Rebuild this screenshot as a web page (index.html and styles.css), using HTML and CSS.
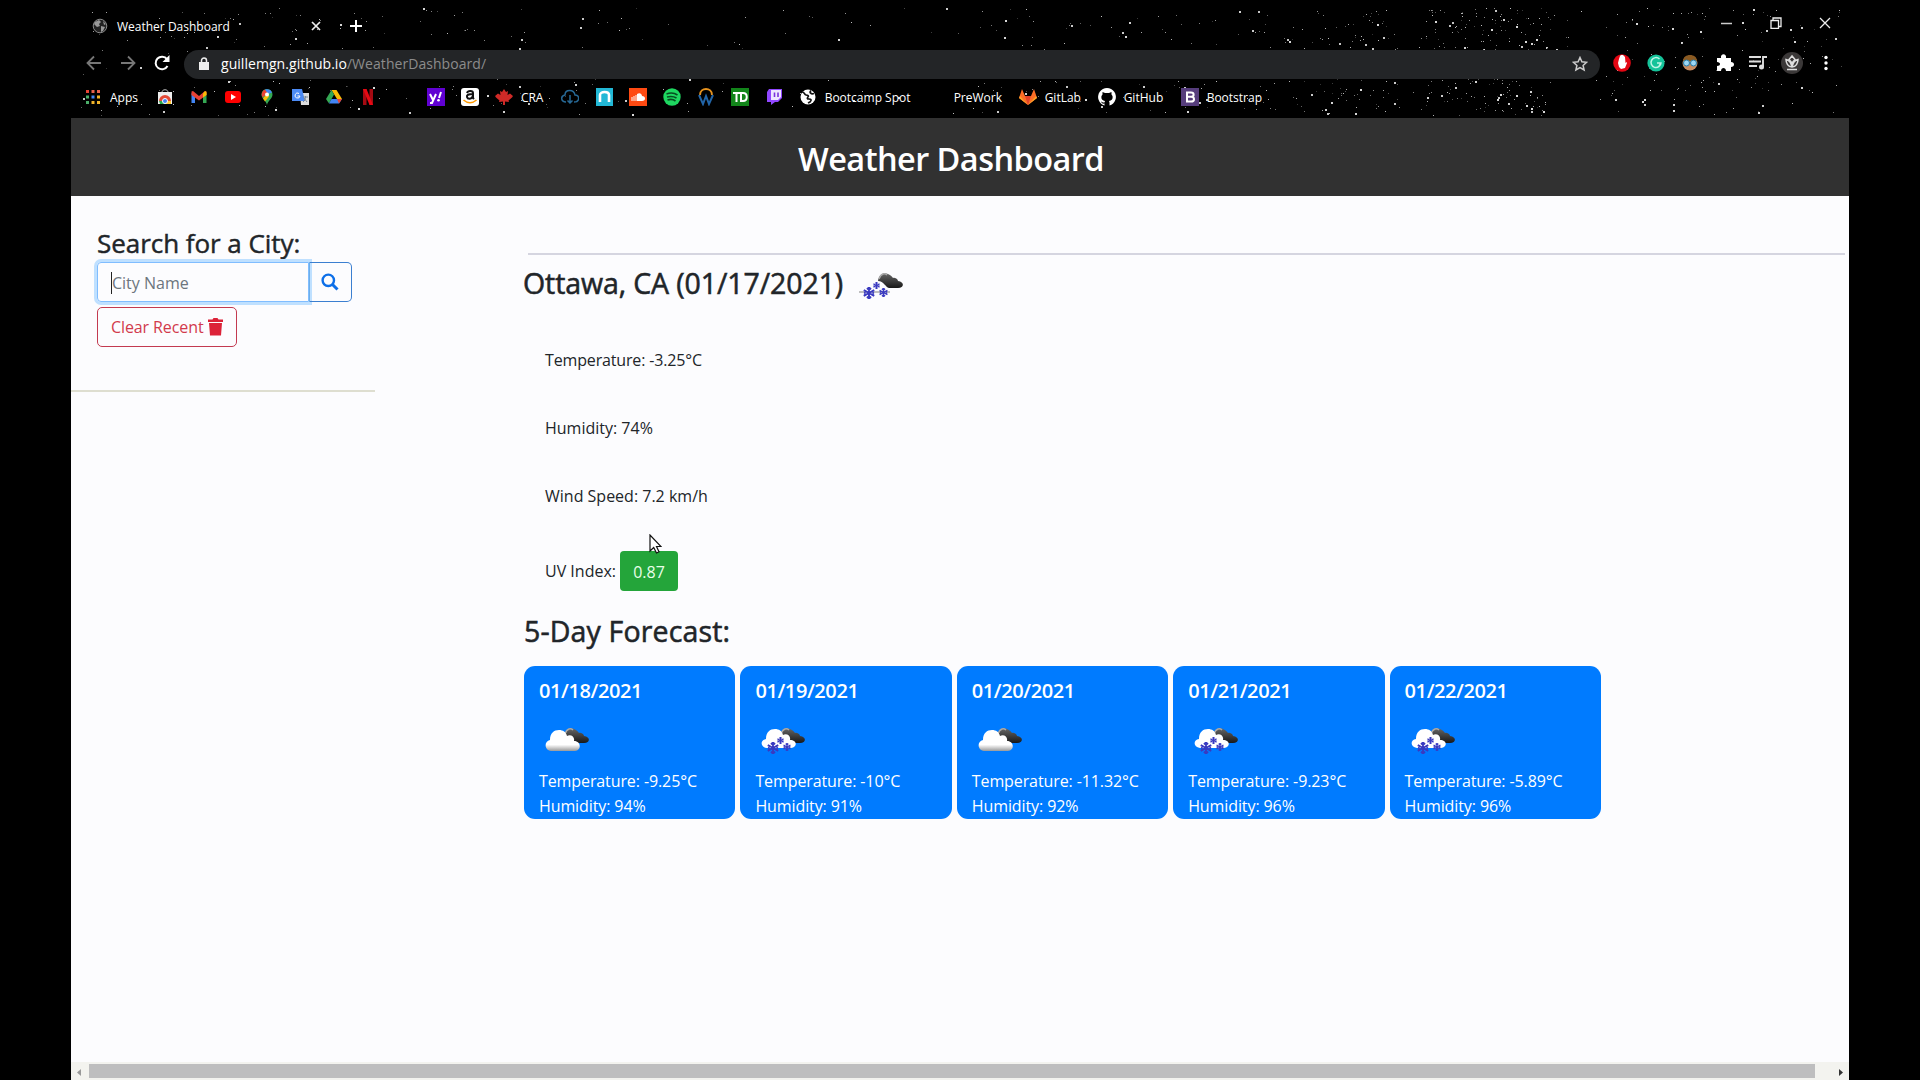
FILE: index.html
```html
<!DOCTYPE html>
<html lang="en">
<head>
<meta charset="utf-8">
<title>Weather Dashboard</title>
<link rel="stylesheet" href="styles.css">
</head>
<body>
<svg class="defs" width="0" height="0" aria-hidden="true">
  <defs>
    <linearGradient id="dark" x1="0" y1="0" x2="0" y2="1"><stop offset="0" stop-color="#666"/><stop offset="1" stop-color="#181818"/></linearGradient>
    <linearGradient id="light" x1="0" y1="0" x2="0" y2="1"><stop offset=".7" stop-color="#fff"/><stop offset="1" stop-color="#999"/></linearGradient>
  </defs>
  <symbol id="darkcloud" viewBox="0 0 44 28"><path d="M19 9C20 2 25 0 29 2c3 1 4 3 5 4 3-1 5 2 5 3 7 1 6 7 0 7h-9c-4-1-5-7-11-7z" fill="url(#dark)"/><path d="M20 7C22 1 26 1 28 3" fill="none" stroke="#aaa" stroke-width="1.5"/></symbol>
  <symbol id="whitecloud" viewBox="0 0 44 28"><path d="M6 24C-1 23-1 14 5 13 5 6 9 3 14 3c4 0 7 2 8 6 4-2 8 1 7 5 7 0 8 9 1 10z" fill="url(#light)"/></symbol>
  <symbol id="flake" viewBox="-6 -6 12 12"><path d="M0-6V6M-5.2-3 5.2 3M-5.2 3 5.2-3M-2-5 0-3 2-5M-2 5 0 3 2 5M-5-.5l2-1M-5 .5l2 1M5-.5l-2-1M5 .5l-2 1" stroke="#3a3ac0" stroke-width="1.9" fill="none"/></symbol>
  <symbol id="clouds" viewBox="0 0 44 28"><use href="#darkcloud" width="44" height="28"/><use href="#whitecloud" width="44" height="28"/></symbol>
  <symbol id="snow" viewBox="0 0 44 28"><use href="#darkcloud" width="44" height="28"/><path d="M6 21C-1 20-1 13 5 12 5 5 9 2 14 2c4 0 7 2 8 6 4-2 8 1 7 5 7 0 8 7 1 8z" fill="#fff"/><use href="#flake" x="6" y="15" width="12" height="12"/><use href="#flake" x="16" y="10" width="7" height="7"/><use href="#flake" x="22" y="16" width="8" height="8"/></symbol>
</svg>
<div class="window">
  <div class="chrome">
    <svg class="stars" id="stars" width="1778" height="118"></svg>
    <div class="tabs">
      <svg class="favicon" viewBox="0 0 16 16"><circle cx="8" cy="8" r="6.8" fill="#222" stroke="#8a8a8a"/><path d="M3 4l4-2 2 2-2 2 1 2-3 1-3-3zM9 8l4 1-2 4-2 1zM11 3l3 3-2 1z" fill="#999"/></svg>
      <span class="tab-title">Weather Dashboard</span>
      <svg class="tab-close" viewBox="0 0 10 10"><path d="M1 1l8 8M9 1 1 9" stroke="#eee" stroke-width="1.7"/></svg>
      <svg class="tab-new" viewBox="0 0 12 12"><path d="M6 0v12M0 6h12" stroke="#fff" stroke-width="2"/></svg>
      <div class="controls">
        <svg viewBox="0 0 12 12"><path d="M0 6.5h11" stroke="#ccc" stroke-width="1.5"/></svg>
        <svg viewBox="0 0 12 12"><path d="M1 3.5h7.500v8H1zM3 3V1h8v8.500H9" stroke="#eee" stroke-width="1.3" fill="none"/></svg>
        <svg viewBox="0 0 12 12"><path d="M1 1l10 10M11 1 1 11" stroke="#eee" stroke-width="1.3"/></svg>
      </div>
    </div>
    <div class="toolbar">
      <svg class="nav" viewBox="0 0 16 16"><path d="M15 8H1.500M8 1.500 1.500 8 8 14.500" stroke="#777" stroke-width="1.8" fill="none"/></svg>
      <svg class="nav" viewBox="0 0 16 16"><path d="M1 8h13.500M8 1.500 14.500 8 8 14.500" stroke="#777" stroke-width="1.8" fill="none"/></svg>
      <svg class="nav" viewBox="0 0 16 16"><path d="M13.500 11A6.300 6.300 0 1 1 13 4.200" stroke="#fff" stroke-width="2" fill="none"/><path d="M15.500 0v7h-7z" fill="#fff"/></svg>
      <div class="omnibox">
        <svg class="lock" viewBox="0 0 10 14"><path d="M0 5h10v8H0z" fill="#eee"/><path d="M2.500 6V3.500a2.500 2.500 0 0 1 5 0V6" stroke="#eee" stroke-width="1.5" fill="none"/></svg>
        <span class="url">guillemgn.github.io<span class="path">/WeatherDashboard/</span></span>
        <svg class="fav" viewBox="0 0 16 16"><path d="M8 1.500l1.900 4.300 4.700.5-3.500 3.100 1 4.600L8 11.600 3.900 14l1-4.600L1.400 6.300l4.700-.5z" stroke="#ccc" stroke-width="1.5" fill="none"/></svg>
      </div>
      <div class="extensions">
        <svg viewBox="0 0 22 22"><circle cx="11" cy="11" r="8.800" fill="#e30613"/><path d="M7 11l1-4 1-3 1-1 2 0 2 2 .5 6 1-1 .5 1-2 5-4 1-2-2z" fill="#fff"/></svg>
        <svg viewBox="0 0 22 22"><circle cx="11" cy="11" r="8.600" fill="#15c39a"/><path d="M14.500 7A5 5 0 1 0 16 11h-4M16 11l-2 3" stroke="#bff5e6" stroke-width="1.500" fill="none"/></svg>
        <svg viewBox="0 0 22 22"><circle cx="11" cy="11" r="7.500" fill="#c98d62"/><path d="M4 9c0-8 14-8 14 0z" fill="#8a5a22"/><circle cx="7.500" cy="11" r="3" fill="#9cd7f5" stroke="#277aa5"/><circle cx="14.500" cy="11" r="3" fill="#9cd7f5" stroke="#277aa5"/></svg>
        <svg viewBox="0 0 22 22"><path d="M4 6h4c-1-5 6-5 5 0h5v4c4 0 4 5 0 5v4h-5c0-4-5-4-5 0H4v-5c4 0 4-4 0-4z" fill="#fff"/></svg>
        <svg viewBox="0 0 22 22"><path d="M2 5h12M2 9.500h12M2 14h8M16 15V5h4" stroke="#ddd" stroke-width="1.900" fill="none"/><circle cx="14.500" cy="15" r="2.500" fill="#ddd"/></svg>
        <svg viewBox="0 0 22 22"><circle cx="11" cy="11" r="11" fill="#3b3838"/><path d="M11 4 8 7.500l3 3.500 3-3.500zM11 15C7 15 5 11 5 7.500c3 .5 5 3 6 7.500 1-4.500 3-7 6-7.500 0 3.500-2 7.500-6 7.500zM6 17.500h10" stroke="#ddd" stroke-width="1.500" fill="none"/></svg>
        <svg viewBox="0 0 22 22"><g fill="#fff"><circle cx="11" cy="5.500" r="1.700"/><circle cx="11" cy="11" r="1.700"/><circle cx="11" cy="16.500" r="1.700"/></g></svg>
      </div>
    </div>
    <div class="bookmarks">
      <div class="bm bm-apps"><svg viewBox="0 0 18 18"><path d="M2 2h3v3H2z" fill="#ea4335"/><path d="M7.500 2h3v3h-3zM13 2h3v3h-3z" fill="#e8614c"/><path d="M2 7.500h3v3H2zM2 13h3v3H2z" fill="#4caf6a"/><path d="M7.500 7.500h3v3h-3z" fill="#4285f4"/><path d="M13 7.500h3v3h-3zM7.500 13h3v3h-3zM13 13h3v3h-3z" fill="#f0b429"/></svg><span>Apps</span></div>
      <div class="bm"><svg viewBox="0 0 18 18"><path d="M2 4h14v12H2z" fill="#eee"/><path d="M6 4c0-3 6-3 6 0" stroke="#bbb" fill="none"/><path d="M3 13a6 6 0 0 1 12 0z" fill="#e34a37"/><path d="M3 13h4l2 3H4z" fill="#2da94f"/><path d="M11 13h4v3H9z" fill="#fc3"/><circle cx="9" cy="13" r="2.500" fill="#4285f4" stroke="#fff"/></svg></div>
      <div class="bm"><svg viewBox="0 0 18 18"><path d="M1.500 5v10H5V8z" fill="#4285f4"/><path d="M16.500 5v10H13V8z" fill="#34a853"/><path d="M1.500 3.500 3 3l6 5 6-5 1.500.5V7L9 12.500 1.500 7z" fill="#ea4335"/><path d="M13 5.500 15 3l1.500 1V7L13 9.500z" fill="#fbbc04"/></svg></div>
      <div class="bm"><svg viewBox="0 0 18 18"><rect x="1" y="3" width="16" height="12" rx="3" fill="#f00"/><path d="M7 6l5 3-5 3z" fill="#fff"/></svg></div>
      <div class="bm"><svg viewBox="0 0 18 18"><path d="M9 17C8 12 3.500 11 3.500 6.500a5.500 5.500 0 0 1 11 0C14.500 11 10 12 9 17z" fill="#34a853"/><path d="M4.500 9.500A5.500 5.500 0 0 1 7 1.500L10 5z" fill="#ea4335"/><path d="M7 1.500c3-1 6 0 7 3L10 6z" fill="#4285f4"/><path d="M5 10.500l5-6 1 4-4 5z" fill="#fbbc04"/><circle cx="9" cy="6.500" r="2" fill="#fff"/></svg></div>
      <div class="bm"><svg viewBox="0 0 18 18"><path d="M8 5h9v12H9z" fill="#ddd"/><path d="M0 1h10l3 12H0z" fill="#4c8bf5"/><path d="M7 5.500A2.500 2.500 0 1 0 8 8H5.500" stroke="#fff" fill="none"/><path d="M11 9h5M13.500 8v1c0 2-1 4-2.500 5M12 10l3 4" stroke="#789" fill="none"/></svg></div>
      <div class="bm"><svg viewBox="0 0 18 18"><path d="M6.500 2h5l5.500 9h-5z" fill="#fbbc04"/><path d="M6.500 2 9 6.500 4 15.500 1 11z" fill="#34a853"/><path d="M6.500 11H17l-3 4.500H4z" fill="#4285f4"/><path d="M12 11h5l-3 4.500z" fill="#ea4335"/></svg></div>
      <div class="bm"><svg viewBox="0 0 18 18"><path d="M4 1h3.500v16H4zM10.500 1H14v16h-3.500z" fill="#a50a12"/><path d="M4 1h3.500L14 17h-3.500z" fill="#e50914"/></svg></div>
      <div class="bm"></div>
      <div class="bm"><svg viewBox="0 0 18 18"><path d="M0 0h18v18H0z" fill="#6001d2"/><path d="M3 6l3 6M9 6l-4 9H3M14 4l-2 6" stroke="#fff" stroke-width="2" fill="none"/><circle cx="11.500" cy="12.300" r="1.300" fill="#fff"/></svg></div>
      <div class="bm"><svg viewBox="0 0 18 18"><rect width="18" height="18" rx="3" fill="#fff"/><path d="M6 5c1-3 6-2.500 6 0v5l1 1M12 6C7 6 5.500 7 6 9s4 3 6-1" stroke="#111" stroke-width="2" fill="none"/><path d="M2.500 12c4 3.500 9 3.500 13 0" stroke="#f90" stroke-width="1.600" fill="none"/></svg></div>
      <div class="bm bm-cra"><svg viewBox="0 0 18 18"><path d="M9 1l2 3 2-1-.5 4L15 5.500 18 8l-1 1.500-3.500 3 .5 1.500-4-.5V17H8v-3.500l-4 .5.500-1.500L1 9.500 0 8l3-2.500L5.500 7 5 3l2 1z" fill="#cf2a27"/></svg><span>CRA</span></div>
      <div class="bm"><svg viewBox="0 0 18 18"><path d="M5 14C0 14-1 8 4 7c0-6 9-6 10 0 5 0 5 7-1 7M9 7v8M6.500 12.500 9 15l2.500-2.500" stroke="#276996" stroke-width="1.500" fill="none"/></svg></div>
      <div class="bm"><svg viewBox="0 0 18 18"><path d="M1 0h17v18H1z" fill="#22b8d6"/><path d="M5 14V7c0-4 9-4 9 0v7" stroke="#fff" stroke-width="2.600" fill="none"/></svg></div>
      <div class="bm"><svg viewBox="0 0 18 18"><path d="M0 0h18v18H0z" fill="#ff4a12"/><path d="M3 9v4M5 8v5M7 7v6" stroke="#fff"/><path d="M8 13V6c3-2 5 0 5 2 4 0 4 5 0 5z" fill="#fff"/></svg></div>
      <div class="bm"><svg viewBox="0 0 18 18"><circle cx="9" cy="9" r="8.700" fill="#1ed760"/><path d="M3.500 6c4-1.500 8-1 11 1M4 9c4-1 7-.5 9.500 1M4.500 12c3-1 6-.5 8 1" stroke="#064d20" stroke-width="1.600" fill="none"/></svg></div>
      <div class="bm"><svg viewBox="0 0 18 18"><path d="M3 7c0-8 12-8 12 0" stroke="#e6921e" stroke-width="2" fill="none"/><path d="M2 7l4 9 3-8 3 8 4-9" stroke="#2265a8" stroke-width="2" fill="none"/></svg></div>
      <div class="bm"><svg viewBox="0 0 18 18"><path d="M0 0h18v18H0z" fill="#12851a"/><path d="M2 5h7M5.500 5v9M10 5v8h2c5 0 5-8 0-8z" stroke="#fff" stroke-width="2" fill="none"/></svg></div>
      <div class="bm"><svg viewBox="0 0 18 18"><path d="M4 1h13v9l-4 4h-3l-4 3v-3H2V4z" fill="#9147ff"/><path d="M6 2h10v7l-3 3H6z" fill="#eee6ff"/><path d="M9.500 4.500V9M13 4.500V9" stroke="#7b35db" stroke-width="1.600"/></svg></div>
      <div class="bm bm-spot"><svg viewBox="0 0 18 18"><circle cx="9" cy="9" r="7.500" fill="#fff"/><path d="M3 4c3 0 2 3 4 3s3 1 2 2-1 2 1 2 3 1 1 3l-2 1M12 2.500c-2 2 0 4 3 3" stroke="#111" stroke-width="1.700" fill="none"/></svg><span>Bootcamp Spot</span></div>
      <div class="bm bm-prework"><span>PreWork</span></div>
      <div class="bm bm-gitlab"><svg viewBox="0 0 18 18"><path d="M9 17 0 10l3-9 3 7h6l3-7 3 9z" fill="#fc6d26"/><path d="M9 17 6 8h6z" fill="#e24329"/><path d="M9 17 0 10l1-2zM9 17l9-7-1-2z" fill="#fca326"/></svg><span>GitLab</span></div>
      <div class="bm bm-github"><svg viewBox="0 0 18 18"><path d="M6.500 17.500v-2c-2 .5-3-.5-3.500-2 1 0 1.500 1.500 3.500 1l.5-1.500C4 12.500 3 11 3.500 8l1-1.500V4L7 5h4l2.500-1v2.500l1 1.500c.5 3-.5 4.500-3.500 5l.5 1.500v3A8.900 8.900 0 1 0 6.500 17.500z" fill="#fff"/></svg><span>GitHub</span></div>
      <div class="bm bm-bootstrap"><svg viewBox="0 0 18 18"><path d="M0 0h18v18H0z" fill="#563d7c"/><path d="M6 4.500v9M5 4.500h5c3.500 0 3.500 4.300 0 4.300H6M10 8.800c4 0 4 4.700 0 4.700H5" stroke="#fff" stroke-width="2" fill="none"/></svg><span>Bootstrap</span></div>
    </div>
  </div>
  <header class="banner"><h1>Weather Dashboard</h1></header>
  <div class="page">
    <aside class="sidebar">
      <h3>Search for a City:</h3>
      <div class="search">
        <div class="field"><i class="caret"></i><span>City Name</span></div>
        <button class="go"><svg viewBox="0 0 18 18"><circle cx="7.300" cy="7.300" r="5.700" fill="none" stroke="#0d6fe8" stroke-width="2.400"/><path d="M11.500 11.500l5 5" stroke="#0d6fe8" stroke-width="3"/></svg></button>
      </div>
      <button class="clear"><span>Clear Recent</span><svg viewBox="0 0 15 18"><path d="M0 1.500h4.500L5.500 0h4l1 1.500H15V4H0zM1 5h13l-1 12.500H2z" fill="#dc2238"/></svg></button>
    </aside>
    <main class="weather">
      <div class="current">
        <h2>Ottawa, CA (01/17/2021)</h2>
        <svg class="wicon" viewBox="0 0 44 28"><use href="#darkcloud" width="44" height="28"/><path d="M0 20h31" stroke="#aaa" stroke-width="1.500"/><use href="#flake" x="4" y="15" width="12" height="12"/><use href="#flake" x="14" y="10" width="7" height="7"/><use href="#flake" x="20" y="16" width="9" height="9"/></svg>
      </div>
      <p>Temperature: -3.25°C</p>
      <p>Humidity: 74%</p>
      <p>Wind Speed: 7.2 km/h</p>
      <p class="uv">UV Index: <span class="badge">0.87</span></p>
      <h2 class="forecast-title">5-Day Forecast:</h2>
      <div class="cards">
        <article class="card"><h5>01/18/2021</h5><svg class="wicon" viewBox="0 0 44 28"><use href="#clouds"/></svg><div>Temperature: -9.25°C</div><div>Humidity: 94%</div></article>
        <article class="card"><h5>01/19/2021</h5><svg class="wicon" viewBox="0 0 44 28"><use href="#snow"/></svg><div>Temperature: -10°C</div><div>Humidity: 91%</div></article>
        <article class="card"><h5>01/20/2021</h5><svg class="wicon" viewBox="0 0 44 28"><use href="#clouds"/></svg><div>Temperature: -11.32°C</div><div>Humidity: 92%</div></article>
        <article class="card"><h5>01/21/2021</h5><svg class="wicon" viewBox="0 0 44 28"><use href="#snow"/></svg><div>Temperature: -9.23°C</div><div>Humidity: 96%</div></article>
        <article class="card"><h5>01/22/2021</h5><svg class="wicon" viewBox="0 0 44 28"><use href="#snow"/></svg><div>Temperature: -5.89°C</div><div>Humidity: 96%</div></article>
      </div>
    </main>
  </div>
  <div class="scrollbar">
    <svg viewBox="0 0 18 16"><path d="M10 5v7L6 8.500z" fill="#999"/></svg>
    <div class="thumb"></div>
    <svg class="right" viewBox="0 0 34 16"><path d="M24 5v7l4-3.500z" fill="#333"/></svg>
  </div>
</div>
<svg class="cursor" viewBox="0 0 13 20"><path d="M1 1v16l3.700-3.500L7.500 19l2.500-1.200L7.500 12.500H12z" fill="#fff" stroke="#111" stroke-width="1.200"/></svg>
<script src="stars.js"></script>
</body>
</html>
```
FILE: styles.css
```css
* { box-sizing: border-box; }
body { margin: 0; background: #000; font-family: "Open Sans", "Noto Sans", sans-serif; color: #212529; overflow: hidden; }
h1, h2, h3, h5, p { margin: 0; font-weight: 500; }
svg { display: block; flex: none; }
.defs { position: absolute; }
.window { width: 1778px; height: 1080px; margin: 0 auto 0 71px; display: flex; flex-direction: column; background: #fcfcfe; }
.chrome { position: relative; height: 118px; background: #000; color: #fff; }
.stars { position: absolute; inset: 0; }
.tabs, .toolbar, .bookmarks { position: relative; display: flex; align-items: center; }

.tabs { height: 44px; padding: 8px 18px 0 21px; font-size: 12px; }
.favicon { width: 16px; height: 16px; margin-right: 9px; }
.tab-title { width: 194px; white-space: nowrap; }
.tab-close { width: 10px; height: 10px; }
.tab-new { width: 12px; height: 12px; margin-left: 29px; }
.controls { display: flex; gap: 37px; margin-left: auto; margin-top: -6px; }
.controls svg { width: 12px; height: 12px; }

.toolbar { height: 38px; padding-left: 15px; }
.nav { width: 16px; height: 16px; margin-right: 18px; }
.omnibox { width: 1416px; height: 29px; margin-left: -4px; margin-top: 2px; border-radius: 15px; background: #232527; display: flex; align-items: center; padding: 0 12px 0 15px; }
.lock { width: 10px; height: 14px; }
.url { margin: -2px 0 0 12px; font-size: 14px; letter-spacing: .05px; flex: 1; }
.path { color: #8c8c8c; }
.fav { width: 16px; height: 16px; }
.extensions { display: flex; gap: 12px; margin-left: 11px; }
.extensions svg { width: 22px; height: 22px; }

.bookmarks { height: 30px; padding-left: 13px; font-size: 12px; }
.bm { flex: 0 0 33.900px; display: flex; align-items: center; gap: 8px; height: 18px; white-space: nowrap; }
.bm svg { width: 18px; height: 18px; }
.bm-apps { flex-basis: 72px; }
.bm-cra { flex-basis: 66.500px; }
.bm-spot { flex-basis: 129px; }
.bm-prework { flex-basis: 91px; padding-left: 26px; }
.bm-gitlab { flex-basis: 79px; }
.bm-github { flex-basis: 83px; }

.banner { height: 78px; background: #313131; text-align: center; padding-right: 18px; }
.banner h1 { color: #fff; font-size: 32.500px; font-weight: 600; letter-spacing: -.55px; line-height: 81px; }

.page { flex: 1; display: flex; }
.sidebar { width: 304px; height: 196px; padding: 30px 0 0 26px; border-bottom: 2px solid #deded0; }
.sidebar h3 { font-size: 26px; line-height: 34px; padding-bottom: 2px; white-space: nowrap; -webkit-text-stroke: .45px #212529; letter-spacing: -.05px; }
.search { display: flex; width: 255px; height: 40px; }
.field { width: 212px; border: 1px solid #80bdff; border-radius: 4px 0 0 4px; box-shadow: 0 0 0 3px #bfe0ff; display: flex; align-items: center; padding: 1px 0 0 13px; color: #6c757d; font-size: 16px; }
.caret { width: 1px; height: 22px; background: #222; }
.go { flex: 1; border: 1px solid #3b7fd0; border-left-color: #6caeea; border-radius: 0 5px 5px 0; background: transparent; padding: 0 0 0 11px; }
.go svg { width: 18px; height: 18px; }
.clear { margin-top: 5px; width: 140px; height: 40px; border: 1px solid #c33a50; border-radius: 5px; background: transparent; color: #d23a4c; font: 16px "Open Sans", sans-serif; letter-spacing: -.1px; padding: 0 13px; display: flex; align-items: center; justify-content: space-between; white-space: nowrap; }
.clear svg { width: 15px; height: 18px; }

.weather { margin-left: 149px; width: 1321px; padding-top: 57px; }
.current { display: flex; border-top: 2px solid #d5d5e0; margin-left: 4px; height: 73px; }
.weather h2 { font-size: 28.500px; line-height: 56px; white-space: nowrap; letter-spacing: -.1px; -webkit-text-stroke: .55px #212529; }
.current h2 { margin-left: -5px; width: 336px; }
.wicon { width: 44px; height: 28px; }
.current .wicon { margin-top: 17px; }
.weather p { font-size: 16px; line-height: 68px; padding-left: 21px; }
.weather p:nth-of-type(1) { letter-spacing: -.15px; }
.weather .uv { display: flex; align-items: center; gap: 4px; height: 78px; line-height: 66px; margin-top: 2px; }
.badge { width: 58px; height: 40px; line-height: 42px; border-radius: 4px; background: #24a53a; color: #e8ffe8; text-align: center; }
.weather .forecast-title { margin-top: -7px; letter-spacing: .15px; }
.cards { display: flex; gap: 5px; margin-top: 7px; }
.card { width: 211.400px; height: 153px; border-radius: 11px; background: #007bff; color: #fff; padding: 12px 15px 0; font-size: 16px; letter-spacing: -.1px; line-height: 25.300px; }
.card h5 { font-size: 20px; font-weight: 600; letter-spacing: -.4px; line-height: 25px; }
.card .wicon { margin: 24px 0 14px 6px; }

.scrollbar { height: 18px; background: #f3f3ef; display: flex; padding-top: 2px; }
.scrollbar svg { width: 18px; height: 16px; }
.scrollbar .right { width: 34px; }
.thumb { flex: 1; height: 14px; background: #bebebf; }
.cursor { position: absolute; left: 649px; top: 534px; width: 13px; height: 20px; }
```
FILE: stars.js
```js
// Star field theme behind the tab strip: [x start, x end, count]
const clusters = [[10, 1778, 330], [90, 300, 60], [290, 560, 60], [880, 1150, 60], [1170, 1330, 150], [1350, 1480, 260], [1540, 1770, 90]];
let seed = 7;
const rnd = () => (seed = (seed * 16807) % 2147483647) / 2147483647;
let out = '';
for (const [a, b, n] of clusters) {
  for (let i = 0; i < n; i++) {
    const x = Math.floor(a + rnd() * (b - a));
    const y = Math.floor(8 + rnd() * 108);
    const bright = rnd();
    const size = bright > 0.85 ? 2 : 1;
    const shade = Math.floor(50 + bright * 170);
    out += `<rect x="${x}" y="${y}" width="${size}" height="${size}" fill="rgb(${shade},${shade},${shade})"/>`;
  }
}
out += '<rect x="1014" y="99" width="2" height="2" fill="#ddd"/>';
document.getElementById('stars').innerHTML = out;
```
